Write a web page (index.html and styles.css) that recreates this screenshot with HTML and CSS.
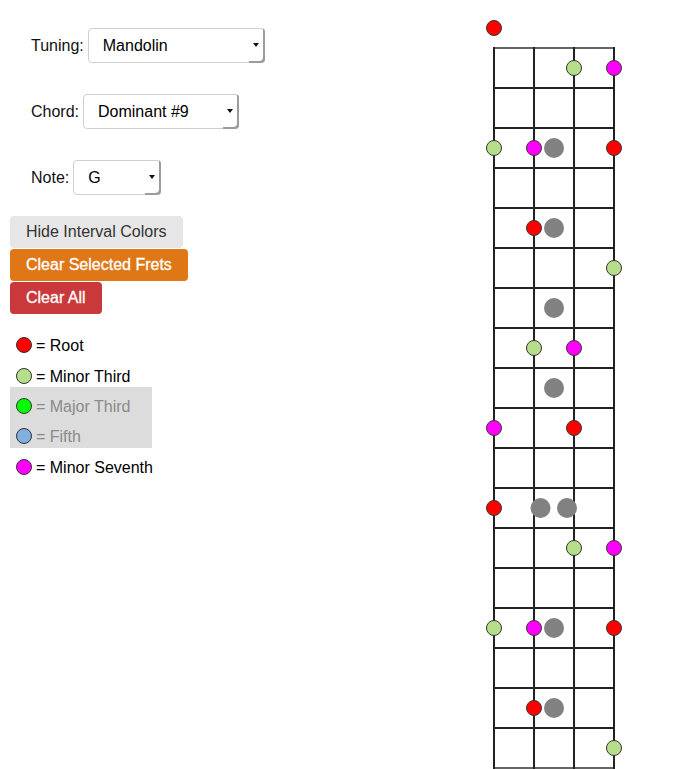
FILE: index.html
```html
<!DOCTYPE html>
<html>
<head>
<meta charset="utf-8">
<title>Chord Finder</title>
<link rel="stylesheet" href="styles.css">
</head>
<body>
<div class="page">
  <div class="panel">
    <div class="field">
      <span class="label">Tuning:</span>
      <div class="select select-tuning"><span class="value">Mandolin</span><span class="arrow"></span></div>
    </div>
    <div class="field">
      <span class="label">Chord:</span>
      <div class="select select-chord"><span class="value">Dominant #9</span><span class="arrow"></span></div>
    </div>
    <div class="field field-last">
      <span class="label">Note:</span>
      <div class="select select-note"><span class="value">G</span><span class="arrow"></span></div>
    </div>
    <div class="buttons">
      <button class="btn btn-light">Hide Interval Colors</button>
      <button class="btn btn-orange">Clear Selected Frets</button>
      <button class="btn btn-red">Clear All</button>
    </div>
    <div class="legend">
      <div class="legend-item"><span class="dot dot-root"></span><span class="legend-text">= Root</span></div>
      <div class="legend-item"><span class="dot dot-m3"></span><span class="legend-text">= Minor Third</span></div>
      <div class="muted">
        <div class="legend-item"><span class="dot dot-M3"></span><span class="legend-text">= Major Third</span></div>
        <div class="legend-item"><span class="dot dot-5"></span><span class="legend-text">= Fifth</span></div>
      </div>
      <div class="legend-item legend-after"><span class="dot dot-m7"></span><span class="legend-text">= Minor Seventh</span></div>
    </div>
  </div>
  <div class="board">
    <svg width="160" height="769" viewBox="0 0 160 769" xmlns="http://www.w3.org/2000/svg">
      <g stroke="#222" stroke-width="2">
        <line x1="23" y1="48" x2="145" y2="48" stroke="#666"/>
        <line x1="23" y1="88" x2="145" y2="88"/>
        <line x1="23" y1="128" x2="145" y2="128"/>
        <line x1="23" y1="168" x2="145" y2="168"/>
        <line x1="23" y1="208" x2="145" y2="208"/>
        <line x1="23" y1="248" x2="145" y2="248"/>
        <line x1="23" y1="288" x2="145" y2="288"/>
        <line x1="23" y1="328" x2="145" y2="328"/>
        <line x1="23" y1="368" x2="145" y2="368"/>
        <line x1="23" y1="408" x2="145" y2="408"/>
        <line x1="23" y1="448" x2="145" y2="448"/>
        <line x1="23" y1="488" x2="145" y2="488"/>
        <line x1="23" y1="528" x2="145" y2="528"/>
        <line x1="23" y1="568" x2="145" y2="568"/>
        <line x1="23" y1="608" x2="145" y2="608"/>
        <line x1="23" y1="648" x2="145" y2="648"/>
        <line x1="23" y1="688" x2="145" y2="688"/>
        <line x1="23" y1="728" x2="145" y2="728"/>
        <line x1="23" y1="768" x2="145" y2="768" stroke="#666"/>
        <line x1="24" y1="47" x2="24" y2="769"/>
        <line x1="64" y1="47" x2="64" y2="769"/>
        <line x1="104" y1="47" x2="104" y2="769"/>
        <line x1="144" y1="47" x2="144" y2="769"/>
      </g>
      <g fill="#818181">
        <circle cx="84" cy="148" r="10"/>
        <circle cx="84" cy="228" r="10"/>
        <circle cx="84" cy="308" r="10"/>
        <circle cx="84" cy="388" r="10"/>
        <circle cx="70.5" cy="508" r="10"/>
        <circle cx="97" cy="508" r="10"/>
        <circle cx="84" cy="628" r="10"/>
        <circle cx="84" cy="708" r="10"/>
      </g>
      <g stroke="#333" stroke-width="1">
        <circle cx="24" cy="28" r="7.5" fill="#ff0000"/>
        <circle cx="104" cy="68" r="7.5" fill="#b5df8b"/>
        <circle cx="144" cy="68" r="7.5" fill="#ff00ff"/>
        <circle cx="24" cy="148" r="7.5" fill="#b5df8b"/>
        <circle cx="64" cy="148" r="7.5" fill="#ff00ff"/>
        <circle cx="144" cy="148" r="7.5" fill="#ff0000"/>
        <circle cx="64" cy="228" r="7.5" fill="#ff0000"/>
        <circle cx="144" cy="268" r="7.5" fill="#b5df8b"/>
        <circle cx="64" cy="348" r="7.5" fill="#b5df8b"/>
        <circle cx="104" cy="348" r="7.5" fill="#ff00ff"/>
        <circle cx="24" cy="428" r="7.5" fill="#ff00ff"/>
        <circle cx="104" cy="428" r="7.5" fill="#ff0000"/>
        <circle cx="24" cy="508" r="7.5" fill="#ff0000"/>
        <circle cx="104" cy="548" r="7.5" fill="#b5df8b"/>
        <circle cx="144" cy="548" r="7.5" fill="#ff00ff"/>
        <circle cx="24" cy="628" r="7.5" fill="#b5df8b"/>
        <circle cx="64" cy="628" r="7.5" fill="#ff00ff"/>
        <circle cx="144" cy="628" r="7.5" fill="#ff0000"/>
        <circle cx="64" cy="708" r="7.5" fill="#ff0000"/>
        <circle cx="144" cy="748" r="7.5" fill="#b5df8b"/>
      </g>
    </svg>
  </div>
</div>
</body>
</html>
```
FILE: styles.css
```css
html, body {
  margin: 0;
  padding: 0;
  background: #fff;
}

body {
  font-family: "Liberation Sans", Arial, sans-serif;
  font-size: 16px;
  color: #111;
}

.page {
  display: flex;
  height: 769px;
  overflow: hidden;
}

.panel {
  width: 470px;
  flex: none;
  box-sizing: border-box;
  padding: 28px 0 0 10px;
}

.field {
  display: flex;
  align-items: center;
  gap: 4px;
  height: 35px;
  margin-left: 21px;
  margin-bottom: 31px;
}

.field-last {
  margin-bottom: 21px;
}

.label {
  color: #111;
}

.select {
  display: flex;
  align-items: stretch;
  height: 35px;
  box-sizing: border-box;
  border: 1px solid #cfcfcf;
  border-radius: 4px;
  background: #fff;
}

.select-tuning { width: 177px; }
.select-chord { width: 156px; }
.select-note { width: 88px; }

.select .value {
  flex: 1;
  display: flex;
  align-items: center;
  padding-left: 14px;
  color: #000;
}

.select .arrow {
  width: 14px;
  display: flex;
  align-items: center;
  justify-content: center;
  margin: -1px -1px -1px 0;
  border-radius: 0 4px 4px 0;
  box-shadow: inset -2px -2px 0 #9c9c9c;
  padding-right: 2px;
  padding-bottom: 1px;
}

.select .arrow::after {
  content: "";
  width: 0;
  height: 0;
  border-left: 3px solid transparent;
  border-right: 3px solid transparent;
  border-top: 4px solid #111;
}

.buttons {
  display: flex;
  flex-direction: column;
  align-items: flex-start;
  gap: 1px;
}

.btn {
  font-family: "Liberation Sans", Arial, sans-serif;
  font-size: 16px;
  height: 32px;
  padding: 0 16px;
  border: none;
  border-radius: 4px;
  line-height: 32px;
  margin: 0;
}

.btn-light {
  background: #e6e6e6;
  color: #333;
}

.btn-orange {
  background: #e07716;
  color: #fff;
  -webkit-text-stroke: 0.3px #fff;
}

.btn-red {
  background: #c9393b;
  color: #fff;
  -webkit-text-stroke: 0.3px #fff;
}

.legend {
  margin-top: 17px;
}

.legend-item {
  display: flex;
  align-items: center;
  height: 30px;
  margin-bottom: 1px;
  padding-left: 6px;
  color: #000;
}

.legend-text {
  margin-left: 4px;
}

.muted {
  width: 142px;
  height: 61px;
  box-sizing: border-box;
  margin-top: -6px;
  padding-top: 5px;
  background: #dcdcdc;
  color: #888;
}

.muted .legend-item {
  color: #8a8a8a;
  margin-bottom: 0;
}

.legend-after {
  margin-top: 5px;
}

.dot {
  width: 14px;
  height: 14px;
  border: 1px solid #333;
  border-radius: 50%;
  display: inline-block;
  flex: none;
  margin-top: -2px;
}

.dot-root { background: #ff0000; }
.dot-m3 { background: #b5df8b; }
.dot-M3 { background: #00ff00; }
.dot-5 { background: #80b0e0; }
.dot-m7 { background: #ff00ff; }

.board {
  flex: none;
  width: 160px;
}

.board svg {
  display: block;
}
```
